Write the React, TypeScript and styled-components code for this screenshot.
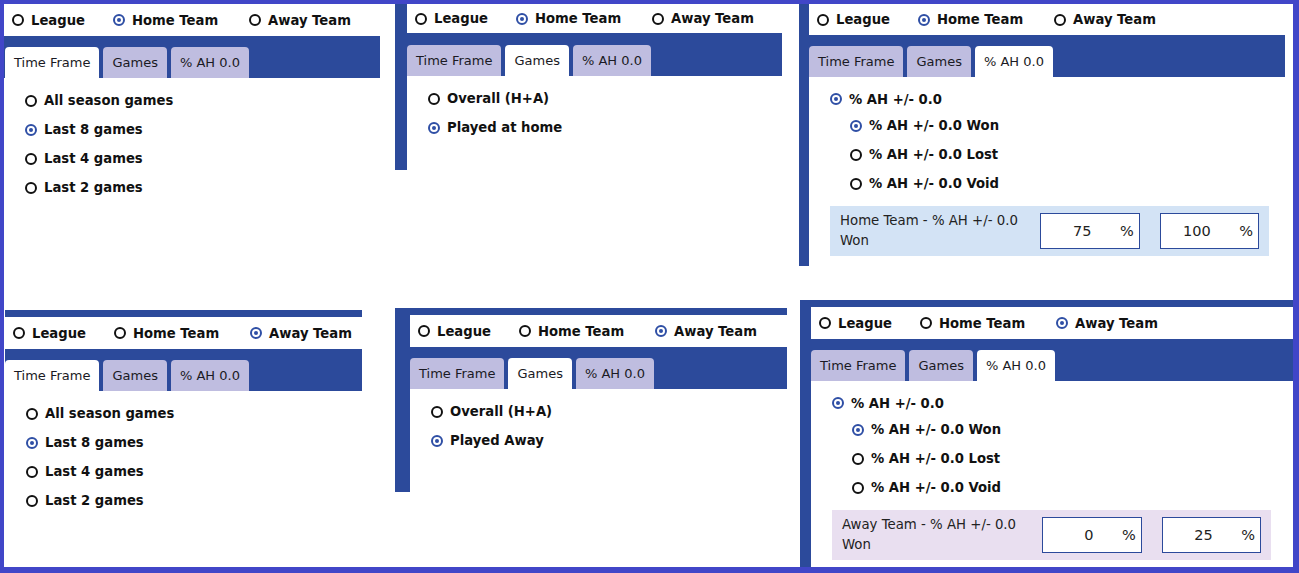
import React from "react";
import styled, { createGlobalStyle } from "styled-components";

const NAVY = "#2c4a9b";
const FRAME = "#4146c8";
const CHECK = "#2f4fa5";

const GlobalStyle = createGlobalStyle`
  html, body {
    margin: 0;
    padding: 0;
    background: #fff;
  }

  body {
    font-family: "DejaVu Sans", "Liberation Sans", sans-serif;
    color: #111;
  }
`;

const Frame = styled.div`
  width: 1299px;
  height: 573px;
  box-sizing: border-box;
  border-style: solid;
  border-color: ${FRAME};
  border-width: 4px 6px 6px 4px;
  background: #fff;
  display: grid;
  grid-template-columns: 391px 404px 1fr;
  grid-template-rows: 296px 1fr;
  overflow: hidden;
`;

const Cell = styled.div<{ $pt?: number; $pl?: number }>`
  display: flex;
  flex-direction: column;
  align-items: flex-start;
  padding: ${p => p.$pt || 0}px 0 0 ${p => p.$pl || 0}px;
  min-width: 0;
  min-height: 0;
`;

const PanelRoot = styled.div<{
  $width: number;
  $left: number;
  $top: number;
  $height?: number;
  $grow?: boolean;
}>`
  width: ${p => p.$width}px;
  box-sizing: border-box;
  border-left: ${p => p.$left}px solid ${NAVY};
  border-top: ${p => p.$top}px solid ${NAVY};
  height: ${p => (p.$height ? `${p.$height}px` : "auto")};
  ${p => p.$grow && "flex: 1 1 auto;"}
  display: flex;
  flex-direction: column;
  background: #fff;
`;

const TeamRow = styled.div<{ $h: number }>`
  height: ${p => p.$h}px;
  display: grid;
  grid-template-columns: 101px 136px auto;
  align-items: center;
  padding-left: 8px;
  background: #fff;
`;

const Option = styled.div`
  display: inline-flex;
  align-items: center;
  gap: 7px;
  font-weight: 700;
  font-size: 13.2px;
  color: #111;
  white-space: nowrap;
`;

const Dot = styled.span<{ $on?: boolean }>`
  width: 12px;
  height: 12px;
  box-sizing: border-box;
  border-radius: 50%;
  border: 2px solid ${p => (p.$on ? CHECK : "#111")};
  display: inline-flex;
  align-items: center;
  justify-content: center;
  flex: none;

  &::after {
    content: "";
    width: 4px;
    height: 4px;
    border-radius: 50%;
    background: ${CHECK};
    display: ${p => (p.$on ? "block" : "none")};
  }
`;

const TabBar = styled.div<{ $h: number; $pl: number }>`
  height: ${p => p.$h}px;
  box-sizing: border-box;
  background: ${NAVY};
  display: flex;
  align-items: flex-end;
  gap: 4px;
  padding-left: ${p => p.$pl}px;
`;

const Tab = styled.div<{ $active?: boolean }>`
  height: 31px;
  padding: 0 9px;
  display: flex;
  align-items: center;
  font-size: 13px;
  color: #1a1a24;
  border-radius: 4px 4px 0 0;
  background: ${p => (p.$active ? "#fff" : "#bfbde0")};
  white-space: nowrap;
`;

const Body = styled.div<{ $pt: number }>`
  display: flex;
  flex-direction: column;
  padding: ${p => p.$pt}px 0 0 21px;
`;

const Choice = styled.div<{ $h: number; $indent?: number }>`
  height: ${p => p.$h}px;
  display: flex;
  align-items: center;
  padding-left: ${p => p.$indent || 0}px;
`;

const RangeRow = styled.div<{ $bg: string }>`
  width: 439px;
  height: 50px;
  box-sizing: border-box;
  margin-top: 8px;
  padding: 0 10px;
  background: ${p => p.$bg};
  display: flex;
  align-items: center;
`;

const RangeLabel = styled.div`
  width: 202px;
  box-sizing: border-box;
  padding-right: 10px;
  font-size: 13.3px;
  line-height: 20px;
  color: #222;
`;

const NumBox = styled.div`
  width: 100px;
  height: 36px;
  box-sizing: border-box;
  border: 1px solid ${NAVY};
  background: #fff;
  display: flex;
  align-items: center;
  padding-right: 5px;
  font-size: 14.5px;
  color: #222;

  & + & {
    margin-left: 20px;
  }
`;

const NumValue = styled.span`
  width: 50px;
  text-align: right;
`;

const Unit = styled.span`
  margin-left: auto;
`;

type Team = "home" | "away";

type PanelProps = {
  width: number;
  left?: number;
  top?: number;
  height?: number;
  grow?: boolean;
  head: number;
  bar: number;
  tabPad?: number;
  team: Team;
  tab: number;
  children: React.ReactNode;
};

const Radio = ({ on, label }: { on?: boolean; label: string }) => (
  <Option>
    <Dot $on={on} />
    {label}
  </Option>
);

const TABS = ["Time Frame", "Games", "% AH 0.0"];

const Panel = ({
  width,
  left = 0,
  top = 0,
  height,
  grow,
  head,
  bar,
  tabPad = 0,
  team,
  tab,
  children
}: PanelProps) => (
  <PanelRoot $width={width} $left={left} $top={top} $height={height} $grow={grow}>
    <TeamRow $h={head}>
      <Radio label="League" />
      <Radio label="Home Team" on={team === "home"} />
      <Radio label="Away Team" on={team === "away"} />
    </TeamRow>
    <TabBar $h={bar} $pl={tabPad}>
      {TABS.map((t, i) => (
        <Tab key={t} $active={i === tab}>
          {t}
        </Tab>
      ))}
    </TabBar>
    {children}
  </PanelRoot>
);

const TimeFrameList = () => (
  <Body $pt={8}>
    <Choice $h={29}>
      <Radio label="All season games" />
    </Choice>
    <Choice $h={29}>
      <Radio label="Last 8 games" on />
    </Choice>
    <Choice $h={29}>
      <Radio label="Last 4 games" />
    </Choice>
    <Choice $h={29}>
      <Radio label="Last 2 games" />
    </Choice>
  </Body>
);

const GamesList = ({ second }: { second: string }) => (
  <Body $pt={8}>
    <Choice $h={29}>
      <Radio label="Overall (H+A)" />
    </Choice>
    <Choice $h={29}>
      <Radio label={second} on />
    </Choice>
  </Body>
);

const AhList = ({
  team,
  bg,
  from,
  to
}: {
  team: string;
  bg: string;
  from: string;
  to: string;
}) => (
  <Body $pt={10}>
    <Choice $h={24}>
      <Radio label="% AH +/- 0.0" on />
    </Choice>
    <Choice $h={29} $indent={20}>
      <Radio label="% AH +/- 0.0 Won" on />
    </Choice>
    <Choice $h={29} $indent={20}>
      <Radio label="% AH +/- 0.0 Lost" />
    </Choice>
    <Choice $h={29} $indent={20}>
      <Radio label="% AH +/- 0.0 Void" />
    </Choice>
    <RangeRow $bg={bg}>
      <RangeLabel>
        {team} - % AH +/- 0.0
        <br />
        Won
      </RangeLabel>
      <NumBox>
        <NumValue>{from}</NumValue>
        <Unit>%</Unit>
      </NumBox>
      <NumBox>
        <NumValue>{to}</NumValue>
        <Unit>%</Unit>
      </NumBox>
    </RangeRow>
  </Body>
);

export default function App() {
  return (
    <>
      <GlobalStyle />
      <Frame>
        <Cell>
          <Panel width={376} head={32} bar={42} tabPad={1} team="home" tab={0}>
            <TimeFrameList />
          </Panel>
        </Cell>
        <Cell>
          <Panel width={387} left={12} height={166} head={29} bar={43} team="home" tab={1}>
            <GamesList second="Played at home" />
          </Panel>
        </Cell>
        <Cell>
          <Panel width={486} left={10} height={262} head={31} bar={42} team="home" tab={2}>
            <AhList team="Home Team" bg="#d3e3f5" from="75" to="100" />
          </Panel>
        </Cell>
        <Cell $pt={10} $pl={1}>
          <Panel width={357} top={7} head={32} bar={42} team="away" tab={0}>
            <TimeFrameList />
          </Panel>
        </Cell>
        <Cell $pt={8}>
          <Panel width={392} left={15} top={7} height={184} head={32} bar={42} team="away" tab={1}>
            <GamesList second="Played Away" />
          </Panel>
        </Cell>
        <Cell $pl={1}>
          <Panel width={493} left={11} top={7} grow head={32} bar={42} team="away" tab={2}>
            <AhList team="Away Team" bg="#e9dff0" from="0" to="25" />
          </Panel>
        </Cell>
      </Frame>
    </>
  );
}
